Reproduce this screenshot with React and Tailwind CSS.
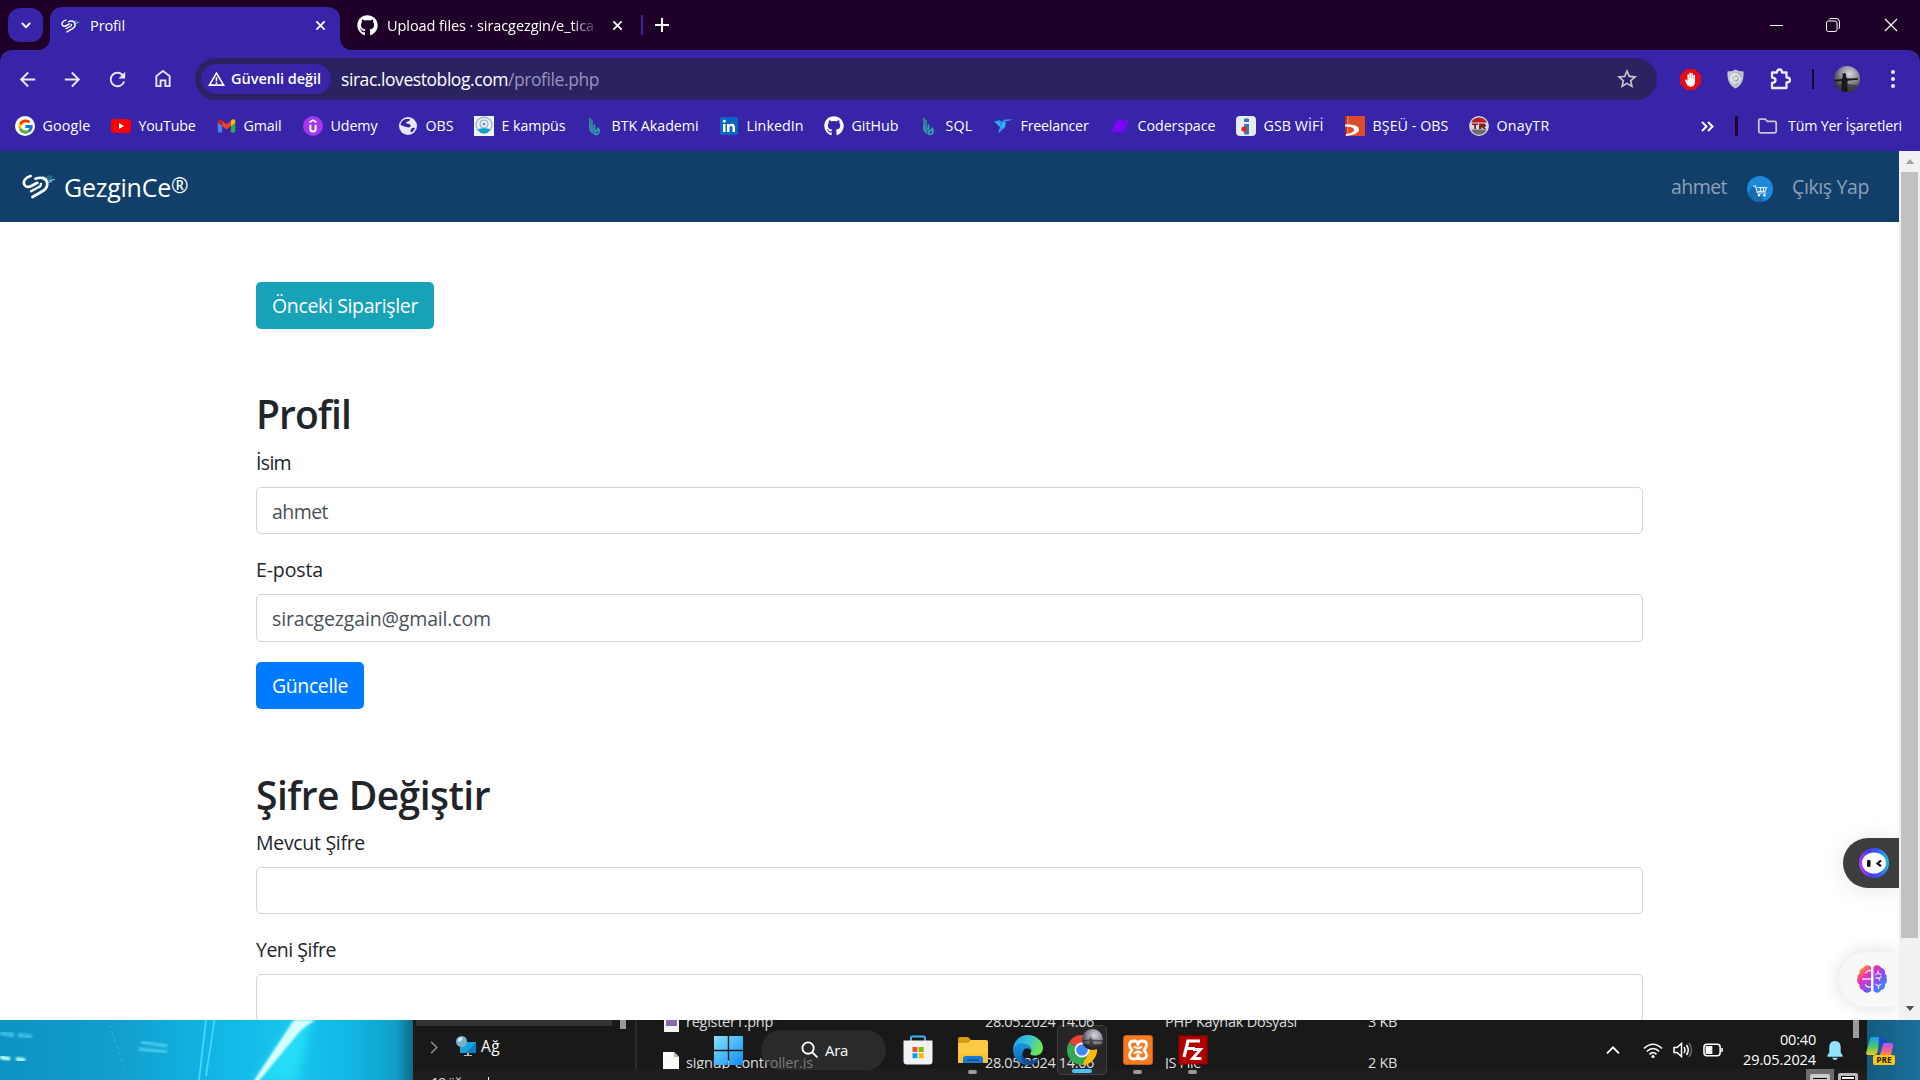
import React, { useLayoutEffect, useRef } from "react";
import { FaGithub } from "react-icons/fa";
import { FcGoogle } from "react-icons/fc";
import { MdArrowBack, MdArrowForward, MdRefresh, MdStarBorder } from "react-icons/md";
import { SiFreelancer } from "react-icons/si";

// Single-line text whose tracking is adjusted so that it fills the given width.
function Fit({ w, className = "", children }) {
  const ref = useRef(null);
  useLayoutEffect(() => {
    const el = ref.current;
    el.style.letterSpacing = "0px";
    const natural = el.getBoundingClientRect().width;
    el.style.letterSpacing = (w - natural) / el.textContent.length + "px";
  }, [w]);
  return (
    <span ref={ref} className={"inline-block shrink-0 whitespace-pre " + className}>
      {children}
    </span>
  );
}

function BrandLogo({ className }) {
  return (
    <svg viewBox="0 0 34 25" className={className} fill="none">
      <path d="M19 3l3-1.500 2 1.500 3-2 4 2-1 2 2 1-4 2.500-3-1-3-2z" fill="#2f83a8" opacity=".6" />
      <path d="M27 6.500l6-1M26 8.500l4-1" stroke="#8fc6de" strokeWidth="1" />
      <path d="M8.500 2C3.500 3.500.8 7 2.300 10.500c1.400 3 4.200 3 7 1.500l6-3.200" stroke="#fff" strokeWidth="2.700" strokeLinecap="round" />
      <path d="M13.500 4.700c5.500-2 10.500-.8 11.500 3.500 1 4-1 7-5 9.300L10.500 23" stroke="#fff" strokeWidth="2.700" strokeLinecap="round" />
      <path d="M9 17.300l7.500-4q2.700-1.500 2.500-3.500" stroke="#fff" strokeWidth="2.300" strokeLinecap="round" />
    </svg>
  );
}

const Cross = ({ className, s = 2 }) => (
  <svg viewBox="0 0 12 12" className={className} stroke="currentColor" strokeWidth={s} fill="none">
    <path d="M1.500 1.500l9 9M10.500 1.500l-9 9" />
  </svg>
);

const GmailIcon = () => (
  <svg viewBox="0 0 20 16" className="h-[14px] w-[19px]">
    <path d="M0 3v11a1.500 1.500 0 0 0 1.500 1.500H5V6z" fill="#4285f4" />
    <path d="M20 3v11a1.500 1.500 0 0 1-1.500 1.500H15V6z" fill="#34a853" />
    <path d="M5 2l5 4 5-4v6l-5 4-5-4z" fill="#ea4335" />
    <path d="M0 2.500C0 .5 2.300-.2 4 1l1 .8V8L0 4.500z" fill="#c5221f" />
    <path d="M20 2.500C20 .5 17.700-.2 16 1l-1 .8V8l5-3.500z" fill="#fbbc04" />
  </svg>
);

const UdemyIcon = () => (
  <svg viewBox="0 0 20 20" className="size-5" fill="none">
    <circle cx="10" cy="10" r="10" fill="#a435f0" />
    <path d="M6.500 6.200L10 4.200l3.500 2" stroke="#fff" strokeWidth="1.600" />
    <path d="M7.400 8.800v4.200a2.600 2.600 0 0 0 5.200 0V8.800" stroke="#fff" strokeWidth="2" />
  </svg>
);

const GlobeIcon = () => (
  <svg viewBox="0 0 20 20" className="size-5">
    <circle cx="10" cy="10" r="9" fill="#e8e8f4" />
    <path d="M11.500 3c1.500 1-.5 2-2 2.500s-2 1.500-1 2 3.500 0 4 1.500-.5 2.500-2 2.500-2.500-1-4-1L2.500 9C3 6 5 3.500 8 3zM13.500 12.500c1-.8 2.500-.8 3.500-.5-.8 2-2 3.500-4 4.500-.8-1-.5-3 .5-4z" fill="#3724a8" />
  </svg>
);

const CampusIcon = () => (
  <svg viewBox="0 0 20 20" className="size-5" fill="none">
    <path d="M0 0h20v20H0z" fill="#eef3f8" />
    <circle cx="10" cy="9" r="7.800" stroke="#7fa3bb" strokeWidth="1.500" strokeDasharray="1.500 .6" />
    <circle cx="10" cy="8" r="4" stroke="#8aa4bd" strokeWidth="1.200" />
    <circle cx="10" cy="8" r="1.500" fill="#6d8fb0" />
    <path d="M4 13c3-1 9-1 12 0-1 3-3 4.500-6 4.500S5 16 4 13z" fill="#0aa3c7" />
  </svg>
);

const LeafIcon = () => (
  <svg viewBox="0 0 20 20" className="size-5" fill="none">
    <path d="M5 1l4 3.500v8.500l-4-3z" fill="#337b9c" />
    <path d="M5 8l4.500 4v6.500c-2.500-1.500-4.500-3-4.500-6z" fill="#318ba4" />
    <path d="M10.500 8.500v6M14.500 13c1.300 2.500 0 5.500-2.500 5.500-2 0-2-2.700 0-3.500s2.500-1.800 2-3.500" stroke="#2f9cb0" strokeWidth="1.900" />
  </svg>
);

const LinkedinIcon = () => (
  <svg viewBox="0 0 18 18" className="size-[18px]">
    <rect width="18" height="18" rx="1.500" fill="#0a66c2" />
    <path d="M3 7h2.500v8H3zM7 7h2.300v1.100C10 7.200 10.800 6.800 12 6.800c2.300 0 3 1.500 3 3.700V15h-2.500v-4.200c0-1.100-.3-1.900-1.300-1.900-1.200 0-1.700.8-1.700 2V15H7z" fill="#fff" />
    <circle cx="4.250" cy="4.300" r="1.450" fill="#fff" />
  </svg>
);

const PlanetIcon = () => (
  <svg viewBox="0 0 20 20" className="size-5" fill="none">
    <circle cx="10" cy="10" r="6.300" fill="#8000ff" />
    <path d="M4 12c-2.500 2-3 3.500-1.500 4C6 16.500 17 8 18.300 5c.5-1.500-1.200-1.300-3-.4" stroke="#7a0af5" strokeWidth="1.600" />
  </svg>
);

const GsbIcon = () => (
  <svg viewBox="0 0 20 20" className="size-5">
    <rect width="20" height="20" rx="4" fill="#e6edf2" />
    <path d="M8 3q3-1.500 5 0v3H8zM8 8h5v10q-2 1-5 0z" fill="#3e79a8" />
    <circle cx="8" cy="13" r="2.600" fill="#ee1c25" />
  </svg>
);

const BseuIcon = () => (
  <svg viewBox="0 0 20 20" className="size-5">
    <path d="M0 0h20v20H0z" fill="#dd4b28" />
    <path d="M0 0h2v20H0z" fill="#b6341c" />
    <path d="M2.500 0h.7v20h-.7z" fill="#f2a58e" />
    <path d="M0 8.500c8-.5 14 1 14 5S8 19 1 20v-2c5-.5 8-2 8-4.300S5 10.500 0 10.500z" fill="#fff" />
  </svg>
);

const TrIcon = () => (
  <svg viewBox="0 0 20 20" className="size-5">
    <circle cx="10" cy="10" r="9.300" fill="#6c6c74" stroke="#ddd" strokeWidth="1.200" />
    <path d="M1.500 9a8.600 8.600 0 0 1 17 0z" fill="#c11c1c" />
    <path d="M1 6.500h18v7H1z" fill="#d9d9de" />
    <path d="M3 7.500h6v1.500H7v4H5.200V9H3zM10 7.500h4.500c3 0 3 3.500.8 3.700l2 1.800h-2.500l-2.300-2v2H10z" fill="#7c2222" />
  </svg>
);

const BOOKMARKS = [
  ["Google", 96, 48, <span className="flex size-5 items-center justify-center rounded-full bg-white"><FcGoogle className="size-[17px]" /></span>],
  ["YouTube", 105, 57, <svg viewBox="0 0 20 14" className="h-[14px] w-5"><rect width="20" height="14" rx="3.500" fill="#f00" /><path d="M8 4l5 3-5 3z" fill="#fff" /></svg>],
  ["Gmail", 87, 38, <GmailIcon />],
  ["Udemy", 95, 47, <UdemyIcon />],
  ["OBS", 76, 28, <GlobeIcon />],
  ["E kampüs", 110, 64, <CampusIcon />],
  ["BTK Akademi", 135, 87, <LeafIcon />],
  ["LinkedIn", 105, 57, <LinkedinIcon />],
  ["GitHub", 94, 47, <FaGithub className="size-5" />],
  ["SQL", 75, 27, <LeafIcon />],
  ["Freelancer", 117, 68, <SiFreelancer className="size-[19px] text-[#29b2fe]" />],
  ["Coderspace", 126, 78, <PlanetIcon />],
  ["GSB WİFİ", 109, 60, <GsbIcon />],
  ["BŞEÜ - OBS", 124, 76, <BseuIcon />],
  ["OnayTR", 100, 53, <TrIcon />],
];

function TabStrip() {
  return (
    <div className="flex h-[50px] bg-[#1f0029] text-[14.500px] leading-[20px]">
      <div className="mt-2 ml-2 flex h-[34px] w-[35px] items-center justify-center rounded-[12px] bg-[#3724a8]">
        <svg viewBox="0 0 12 8" className="h-[7px] w-[10px]" fill="none" stroke="currentColor" strokeWidth="2.200"><path d="M1 1l5 5 5-5" /></svg>
      </div>
      <div className="flex w-[7px] items-end justify-end overflow-visible">
        <svg viewBox="0 0 12 12" className="-ml-[5px] size-3 shrink-0" fill="#3724a8"><path d="M12 0v12H0A12 12 0 0 0 12 0z" /></svg>
      </div>
      <div className="mt-[7px] flex h-[43px] w-[290px] items-center rounded-t-[12px] bg-[#3724a8] pb-[6px] pl-[11px]">
        <BrandLogo className="h-[14px] w-[19px]" />
        <Fit w={35} className="ml-[10px]">Profil</Fit>
        <Cross className="ml-[190px] size-[11px]" />
      </div>
      <div className="flex w-3 items-end"><svg viewBox="0 0 12 12" className="size-3" fill="#3724a8"><path d="M0 0v12h12A12 12 0 0 1 0 0z" /></svg></div>
      <div className="flex items-center pl-[5px]">
        <FaGithub className="size-[21px]" />
        <div className="mt-[2px] ml-[9px] w-[208px] [mask-image:linear-gradient(to_right,black_185px,transparent_212px)]">
          <Fit w={207}>Upload files · siracgezgin/e_tica</Fit>
        </div>
        <Cross className="ml-[17px] size-[11px]" />
        <div className="ml-[18px] h-[20px] w-[2px] bg-[#3724a8]" />
        <svg viewBox="0 0 14 14" className="ml-[12px] size-[14px]" stroke="currentColor" strokeWidth="2"><path d="M7 0v14M0 7h14" /></svg>
      </div>
      <div className="ml-auto flex items-center gap-[43px] pr-[21px]">
        <div className="h-px w-[13px] bg-white" />
        <svg viewBox="0 0 14 14" className="size-[14px]" fill="none" stroke="currentColor"><rect x=".5" y="3" width="10.500" height="10.500" rx="2" /><path d="M3 1.500q.5-1 2-1h5q3.500 0 3.500 3.500v5q0 1.500-1 2" /></svg>
        <Cross className="size-[16px]" s={0.9} />
      </div>
    </div>
  );
}

function Toolbar() {
  return (
    <div className="flex h-[58px] items-center">
      <div className="flex w-[195px] items-center gap-[22px] pl-[16px] text-[#e9e6f8]">
        <MdArrowBack className="size-[23px]" />
        <MdArrowForward className="size-[23px]" />
        <MdRefresh className="size-[23px]" />
        <svg viewBox="0 0 18 20" className="-mt-[2px] ml-[3px] h-[19px] w-[18px]" fill="none" stroke="currentColor" strokeWidth="2"><path d="M2 18V7.500L9 2l7 5.500V18h-4.500v-6h-5v6z" /></svg>
      </div>
      <div className="flex h-[42px] w-[1462px] items-center rounded-full bg-[#2b2262] pl-[6px]">
        <div className="flex h-[30px] w-[130px] items-center rounded-full bg-[#3724a8] pl-[7px]">
          <svg viewBox="0 0 18 16" className="h-[16px] w-[17px]" fill="none" stroke="currentColor" strokeWidth="1.700"><path d="M9 1.700L16.500 14.500h-15zM9 6v4.500M9 11.500v1.800" /></svg>
          <Fit w={90} className="ml-[6px] text-[14.500px] font-semibold leading-[20px]">Güvenli değil</Fit>
        </div>
        <div className="ml-[10px] flex text-[17.500px] leading-[24px]">
          <Fit w={167}>sirac.lovestoblog.com</Fit>
          <Fit w={91} className="text-[#9a93bd]">/profile.php</Fit>
        </div>
        <MdStarBorder className="mr-[18px] ml-auto size-[24px] text-[#c9c6cf]" />
      </div>
      <div className="flex items-center text-[#eeeafb]">
        <svg viewBox="0 0 20 20" className="ml-[23px] size-[21px]"><path d="M6 0h8l6 6v8l-6 6H6l-6-6V6z" fill="#e80d12" /><path d="M4.500 10.300q1-.8 2 .5l.6.7V5.400q.9-1 1.500 0V9h.3V3.800q.9-1 1.600 0V9h.3V4.300q.9-1 1.600 0V9.500h.3V6q.9-1 1.600 0v6c0 3-1.300 4.800-3.700 4.800-2.600 0-3.500-1-4.600-3z" fill="#fff" /></svg>
        <svg viewBox="0 0 18 20" className="ml-[26px] h-[20px] w-[17px]"><path d="M9 0c3 2 6 2 8.500 2 .5 9-2 14.500-8.500 18C2.500 16.500 0 11 .5 2 3 2 6 2 9 0z" fill="#c3c8ce" /><path d="M9 2v16c4-3 6.300-6 6.600-14C13 4 11 3.500 9 2z" fill="#aab0b8" /><circle cx="9" cy="9.500" r="4.600" fill="none" stroke="#f2f2f4" strokeWidth="1.500" /><path d="M7 11l1.500-3 3-.5-1 3z" fill="#e5e5e8" /></svg>
        <svg viewBox="0 0 22 22" className="ml-[25px] size-[22px]" fill="none" stroke="currentColor" strokeWidth="2.300" strokeLinejoin="round"><path d="M3 4.500h5q0-3 2.500-3t2.500 3h4.500V9.500q3.500 0 3.500 2.500t-3.500 2.500v5.500H3v-5q3.500-.5 3.500-2.800T3 9.500z" /></svg>
        <div className="ml-[21px] h-[20px] w-[2px] bg-[#1f0029]" />
        <svg viewBox="0 0 26 26" className="ml-[20px] size-[26px]">
          <defs><radialGradient id="sky" cx=".6" cy=".3" r=".7"><stop stopColor="#d6d6de" /><stop offset=".5" stopColor="#8b8b94" /><stop offset="1" stopColor="#2c2c33" /></radialGradient><clipPath id="round"><circle cx="13" cy="13" r="13" /></clipPath></defs>
          <g clipPath="url(#round)"><path d="M0 0h26v26H0z" fill="url(#sky)" /><path d="M0 20q13-4 26 0v6H0z" fill="#3d3d40" opacity=".8" /><path d="M0 14l8-1 .8-3.200a1.800 1.800 0 1 1 3 0L13 12.500l11-.3v1.500l-10.500 1V26H7.500V15L0 15.500z" fill="#17171c" /></g>
        </svg>
        <div className="ml-[31px] flex flex-col gap-[3px]">
          <i className="size-[4px] rounded-full bg-current" /><i className="size-[4px] rounded-full bg-current" /><i className="size-[4px] rounded-full bg-current" />
        </div>
      </div>
    </div>
  );
}

function Bookmarks() {
  return (
    <div className="flex h-[43px] items-start pt-[8px] pl-[15px] text-[14.250px] leading-[20px]">
      {BOOKMARKS.map(([name, width, textWidth, icon]) => (
        <div key={name} className="flex shrink-0 items-center gap-[7.500px]" style={{ width }}>
          <span className="flex size-5 shrink-0 items-center justify-center">{icon}</span>
          <Fit w={textWidth}>{name}</Fit>
        </div>
      ))}
      <div className="ml-auto flex items-center pr-[18px]">
        <svg viewBox="0 0 13 11" className="h-[11px] w-[13px]" fill="none" stroke="currentColor" strokeWidth="2"><path d="M1 1l4.500 4.500L1 10M7 1l4.500 4.500L7 10" /></svg>
        <div className="ml-[21px] h-5 w-[3px] rounded bg-[#1f0029]" />
        <svg viewBox="0 0 22 18" className="ml-[19px] h-[16px] w-[21px]" fill="none" stroke="#c9c6cf" strokeWidth="2"><path d="M1.200 3q0-1.800 1.800-1.800h5.500l2.300 2.500H19q1.800 0 1.800 1.800V15q0 1.800-1.800 1.800H3q-1.800 0-1.800-1.800z" /></svg>
        <Fit w={114} className="ml-[10px]">Tüm Yer İşaretleri</Fit>
      </div>
    </div>
  );
}

function Field({ label, w, value, vw, tall }) {
  return (
    <div className="mb-[20px]">
      <div className="mb-[10px] h-[30px] pt-px leading-[30px]"><Fit w={w}>{label}</Fit></div>
      <div className={"flex items-center rounded-[5px] border border-[#ced4da] bg-white pt-[2px] pl-[15px] text-[#495057] " + (tall ? "h-[48px]" : "h-[47px]")}>
        {value && <Fit w={vw}>{value}</Fit>}
      </div>
    </div>
  );
}

function Page() {
  return (
    <div className="relative h-[869px] w-[1899px] overflow-hidden bg-white">
      <div className="flex h-[71px] items-center bg-[#123f69] pl-[22px] text-white">
        <BrandLogo className="h-[25px] w-[34px]" />
        <div className="mt-px ml-[8px] flex text-[25px] leading-[36px]">
          <Fit w={107}>GezginCe</Fit>
          <Fit w={20} className="-mt-[2px] text-[21px]">®</Fit>
        </div>
        <div className="ml-auto flex items-center pr-[30px] text-[19.500px] leading-[30px] text-[#8ca1b6]">
          <Fit w={56}>ahmet</Fit>
          <svg viewBox="0 0 26 26" className="mt-[4px] ml-[20px] size-[26px]">
            <circle cx="13" cy="13" r="13" fill="#1e88dc" />
            <path d="M6 10l12 15.500A13 13 0 0 1 1 16.500z" fill="#17629f" opacity=".75" />
            <path d="M6 10h2.500l2 7h8.500M10.500 11.500h9l-1.500 4h-7M13.500 11.500v4M16.500 11.500v4" fill="none" stroke="#dcebf7" strokeWidth="1.200" />
            <circle cx="12" cy="19.300" r="1.200" fill="#fff" /><circle cx="17.500" cy="19.300" r="1.200" fill="#fff" />
          </svg>
          <Fit w={77} className="ml-[19px]">Çıkış Yap</Fit>
        </div>
      </div>
      <div className="mx-[256px] w-[1387px] pt-[60px] text-[19.500px] text-[#212529]">
        <div className="flex h-[47px] w-[178px] items-center rounded-[5px] bg-[#17a2b8] pt-px pl-[16px] text-white"><Fit w={146}>Önceki Siparişler</Fit></div>
        <h2 className="mt-[61px] mb-[9px] h-[48px] text-[39px] leading-[48px] font-semibold"><Fit w={95}>Profil</Fit></h2>
        <Field label="İsim" w={35} value="ahmet" vw={56} />
        <Field label="E-posta" w={67} value="siracgezgain@gmail.com" vw={219} tall />
        <div className="flex h-[47px] w-[108px] items-center rounded-[5px] bg-[#007bff] pt-px pl-[16px] text-white"><Fit w={76}>Güncelle</Fit></div>
        <h2 className="mt-[62px] mb-[8px] h-[48px] text-[39px] leading-[48px] font-semibold"><Fit w={234}>Şifre Değiştir</Fit></h2>
        <Field label="Mevcut Şifre" w={109} />
        <Field label="Yeni Şifre" w={80} tall />
      </div>
      <div className="absolute top-[687px] right-0 flex h-[50px] w-[56px] items-center rounded-l-full bg-[#3c3d3f] pl-[16px] shadow-[0_2px_24px_rgba(0,0,0,0.1)]">
        <svg viewBox="0 0 30 30" className="size-[30px]">
          <defs><linearGradient id="ring" x1="0" y1=".7" x2="1" y2=".6"><stop stopColor="#b63df0" /><stop offset=".4" stopColor="#4339ee" /><stop offset=".7" stopColor="#3d5df5" /><stop offset="1" stopColor="#1cc0d8" /></linearGradient></defs>
          <circle cx="15" cy="15" r="15" fill="url(#ring)" />
          <ellipse cx="15" cy="15" rx="12" ry="10.500" fill="#fff" />
          <rect x="8" y="12" width="3.500" height="7" rx="1.200" fill="#111" />
          <path d="M22 12.500l-3.500 3 3.500 2.700" fill="none" stroke="#111" strokeWidth="2.200" />
        </svg>
      </div>
      <div className="absolute top-[801px] right-0 flex h-[55px] w-[60px] items-center rounded-l-full bg-[#f8f8f9] pb-px pl-[18px] shadow-[0_0_18px_rgba(0,0,0,0.14)]">
        <svg viewBox="0 0 30 28" className="h-[28px] w-[30px]">
          <defs><linearGradient id="brain" x1="0" y1="0" x2="1" y2="1"><stop stopColor="#ff9a1f" /><stop offset=".14" stopColor="#ff8a2f" /><stop offset=".32" stopColor="#f02fb4" /><stop offset=".6" stopColor="#7b52f5" /><stop offset="1" stopColor="#19a8fb" /></linearGradient></defs>
          <path d="M14 2v24c-3 3-7 2-8-1-3-.5-4-3-3.500-5.500C0 18 0 15 .5 14 0 11.500 1 9.500 2.500 8.500 2 5.500 4 3.500 6 3c1.500-3 6-4 8-1zM16.500 2v24c3 3 6.500 1.500 7.500-1 3-.5 4.500-3 4-5.500 2-1.500 2.500-4 1.500-6C30 11.500 29.500 9.500 28 8.500 28.500 5.500 27 3.500 24.500 3c-1.500-3-6-4-8-1z" fill="url(#brain)" />
          <path d="M14 5.500H11.500L8 8.500M5 14h9M14 22h-3.500L8 19.500M21 5.500v2.500l-2.500 2M21 8l3.500 2M18.500 13h4l2-1.500M22.500 13v2.500M18.500 19l3 2v3M21.500 21l2.500-2" fill="none" stroke="#f6d9fb" strokeWidth="1.300" />
        </svg>
      </div>
    </div>
  );
}

function Scrollbar() {
  return (
    <div className="flex h-[869px] w-[21px] flex-col items-center bg-[#f1f1f1]">
      <svg viewBox="0 0 10 6" className="my-[8px] h-[5px] w-[10px]" fill="#a3a3a3"><path d="M0 6l5-6 5 6z" /></svg>
      <div className="h-[766px] w-[17px] bg-[#c1c1c1]" />
      <svg viewBox="0 0 10 6" className="mt-auto mb-[9px] h-[5px] w-[10px]" fill="#505050"><path d="M0 0h10L5 6z" /></svg>
    </div>
  );
}

function FileRow({ icon, name, nw, date, type, tw, size }) {
  return (
    <div className="flex h-[24px] items-center leading-[24px]">
      <span className="flex w-[49px] justify-end pr-[7px]">{icon}</span>
      <span className="w-[299px]"><Fit w={nw}>{name}</Fit></span>
      <span className="w-[180px]"><Fit w={109}>{date}</Fit></span>
      <span className="w-[203px]"><Fit w={tw}>{type}</Fit></span>
      <Fit w={29}>{size}</Fit>
    </div>
  );
}

function Wallpaper() {
  return (
    <svg viewBox="0 0 413 60" className="h-[60px] w-[413px] shrink-0" preserveAspectRatio="none">
      <defs>
        <linearGradient id="sea"><stop stopColor="#0c93c4" /><stop offset=".3" stopColor="#139fcf" /><stop offset=".5" stopColor="#10b4e4" /><stop offset=".7" stopColor="#18c5ee" /><stop offset=".85" stopColor="#10b6e4" /><stop offset=".96" stopColor="#119fc9" /><stop offset="1" stopColor="#0c6a84" /></linearGradient>
        <filter id="soft" x="-50%" width="200%"><feGaussianBlur stdDeviation="5" /></filter>
        <filter id="haze"><feGaussianBlur stdDeviation=".8" /></filter>
      </defs>
      <path d="M0 0h413v60H0z" fill="url(#sea)" />
      <path d="M255 62L294 0h18l-14 62z" fill="#2ff0ff" opacity=".55" filter="url(#soft)" />
      <path d="M253 62L290 6l4-6h22q-12 6-20 16l-38 46z" fill="#d9ffff" filter="url(#haze)" />
      <path d="M206 0l-7 60M214.500 0L206 56" stroke="#45d9fb" strokeWidth="1.700" />
      <path d="M141 22l26 4M139 29l28 3" stroke="#52d6f5" strokeWidth="2.400" filter="url(#haze)" />
      <path d="M0 13l14 2M18 15l14 2" stroke="#3bbde6" strokeWidth="4.500" filter="url(#haze)" />
      <path d="M0 37l10 2M16 39l9 1" stroke="#b9fff2" strokeWidth="4" filter="url(#haze)" />
      <path d="M110 6l16 46" stroke="#4ac9ea" strokeDasharray="2 5" opacity=".7" />
    </svg>
  );
}

function Desktop() {
  return (
    <div className="flex h-[60px] overflow-hidden">
      <Wallpaper />
      <div className="flex h-[60px] w-[1454px] shrink-0 flex-col overflow-hidden bg-[#191919] text-[14.500px] text-[#dedede]">
        <div className="flex h-[49px] overflow-hidden">
          <div className="h-[49px] w-[199px] pl-[3px]">
            <div className="h-[6px] w-[196px] bg-[#333]" />
            <div className="flex h-[42px] items-center pl-[14px]">
              <svg viewBox="0 0 8 14" className="h-[13px] w-[8px]" fill="none" stroke="#8a8a8a" strokeWidth="1.700"><path d="M1 1l6 6-6 6" /></svg>
              <svg viewBox="0 0 20 20" className="-mt-[3px] ml-[18px] size-[20px]"><path d="M4 6h16v11H4z" fill="#16a3dc" /><path d="M20 6v11H10z" fill="#0b7fc0" /><path d="M11 17h2v2h3v1.200H8V19h3z" fill="#bbb" /><circle cx="5.500" cy="5.500" r="5.500" fill="#77b3cf" /><path d="M2 3q3-3 5-1l-2 3-3 1z" fill="#d8ecf5" /></svg>
              <Fit w={19} className="ml-[5px] text-[15.500px] text-white">Ağ</Fit>
            </div>
          </div>
          <div className="w-[23px] pl-[8px]"><div className="h-[9px] w-[6px] bg-[#9a9a9a]" /></div>
          <div className="w-[2px] bg-[#2b2b2b]" />
          <div className="-mt-[10px] flex flex-col gap-[16.500px]">
            <FileRow icon={<span className="flex h-[20px] w-[15px] items-center bg-[#f2f2f2] p-[2px]"><i className="h-[8px] w-full bg-[#8867b4]" /></span>} name="register1.php" nw={87} date="28.05.2024 14:06" type="PHP Kaynak Dosyası" tw={132} size="3 KB" />
            <FileRow icon={<svg viewBox="0 0 16 20" className="-mt-[2px] h-[20px] w-[16px]"><path d="M0 0h11l5 5v15H0z" fill="#fafafa" /><path d="M11 0v5h5z" fill="#bbb" /></svg>} name="signup-controller.js" nw={127} date="28.05.2024 14:06" type="JS File" tw={36} size="2 KB" />
          </div>
          <div className="ml-auto mr-[8px] h-[18px] w-[6px] bg-[#9a9a9a]" />
        </div>
        <div className="flex h-[11px] overflow-hidden bg-[#1e1e1e] pl-[18px] leading-[20px]">
          <div className="mt-[4px] flex"><Fit w={37}>19 öğe</Fit><span className="mt-[4px] ml-[20px] h-[10px] w-px bg-white" /></div>
          <div className="ml-auto flex gap-[4px] pr-[9px]">
            <div className="h-[11px] w-[28px] bg-[#6d6d6d] px-[4px] pt-[5px]"><div className="h-[6px] rounded-t-[2px] bg-[#c9c9c9] px-[3px] pt-[4px]"><div className="h-px bg-black" /></div></div>
            <div className="mt-[4px] h-[7px] w-[20px] rounded-t-[2px] bg-[#b9b9b9] px-[3px] pt-[3px]"><div className="h-[4px] border border-black bg-white" /></div>
          </div>
        </div>
      </div>
      <div className="h-[60px] w-[53px] bg-linear-to-r from-[#145a80] to-[#1c6f9e]" />
    </div>
  );
}

function TaskIcon({ children, dot }) {
  return (
    <div className="flex h-[60px] w-[55px] flex-col items-center pt-[15px]">
      <div className="flex size-[30px] items-center justify-center">{children}</div>
      {dot && <div className="mt-[5px] h-[4px] w-[9px] rounded-full bg-[#9a9a9a]" />}
    </div>
  );
}

function Taskbar() {
  return (
    <div className="absolute bottom-0 left-0 flex h-[60px] w-[1920px] items-start pl-[714px] text-white">
      <svg viewBox="0 0 29 29" className="mt-[16px] size-[29px]">
        <defs><linearGradient id="win" x1="0" y1="0" x2="1" y2="1"><stop stopColor="#8be2ff" /><stop offset="1" stopColor="#0a8df5" /></linearGradient></defs>
        <path d="M0 0h13.800v13.800H0zM15.200 0H29v13.800H15.200zM0 15.200h13.800V29H0zM15.200 15.200H29V29H15.200z" fill="url(#win)" />
      </svg>
      <div className="mt-[10px] ml-[18px] flex h-[40px] w-[125px] items-center rounded-full bg-[#353535]/60 pl-[40px]">
        <svg viewBox="0 0 18 18" className="-mt-[2px] size-[17px]" fill="none" stroke="currentColor" strokeWidth="1.900"><circle cx="7.500" cy="7.500" r="6" /><path d="M12 12l5.500 5.500" /></svg>
        <Fit w={23} className="ml-[7px] text-[15px]">Ara</Fit>
      </div>
      <div className="ml-[4px] flex">
        <TaskIcon>
          <svg viewBox="0 0 30 30" className="size-[30px]"><path d="M8 6V3q0-1.500 1.500-1.500h11Q22 1.500 22 3v3" fill="none" stroke="#3ab7f0" strokeWidth="2" /><path d="M.5 5.500h29V26q0 3.500-3.500 3.500H4Q.5 29.500.5 26z" fill="#f0f1f3" /><path d="M9.500 12h5v5h-5z" fill="#f25022" /><path d="M15.700 12h5v5h-5z" fill="#7fba00" /><path d="M9.500 18.200h5v5h-5z" fill="#00a4ef" /><path d="M15.700 18.200h5v5h-5z" fill="#ffb900" /></svg>
        </TaskIcon>
        <TaskIcon dot>
          <svg viewBox="0 0 30 30" className="size-[30px]"><path d="M0 4q0-2 2-2h8l4 4v4H0z" fill="#d89a12" /><path d="M0 8h10l3-3h15q2 0 2 2v21H0z" fill="#fbcb45" /><path d="M0 18h30v10H0z" fill="#f7bd2f" opacity=".6" /><path d="M5 28v-4q0-3 3-3h14q3 0 3 3v4z" fill="#1779cf" /><path d="M9 25h12" stroke="#0b5394" strokeWidth="1.500" /></svg>
        </TaskIcon>
        <TaskIcon>
          <svg viewBox="0 0 30 30" className="size-[30px]">
            <defs><linearGradient id="edgeA" x1="0" y1="0" x2="1" y2=".4"><stop stopColor="#1e9de0" /><stop offset=".5" stopColor="#35c1df" /><stop offset="1" stopColor="#6be35a" /></linearGradient><linearGradient id="edgeB" x1="0" y1="0" x2="0" y2="1"><stop stopColor="#1b93dd" /><stop offset="1" stopColor="#1263b4" /></linearGradient></defs>
            <path d="M0 15C0 6 7 0 15 0s15 6 15 13c0 5-4 7.500-8 7.500-3 0-5.500-1-4.500-2.500 2-3 .5-8-5-8C6 10 1.500 12 0 15z" fill="url(#edgeA)" />
            <path d="M0 15c1-5 6-7.500 11-6.500 5 .5 7.500 4 7 7-3-4-8-2.500-8.500 3-.4 6 4 10 8.500 11C8 31.500 0 24 0 15z" fill="url(#edgeB)" />
            <path d="M9.500 18c0 5 4 8 9 7.500 3-.2 6-2 8.500-3.500-2 5-6.500 8-11 8-6 0-10-7-6.500-12z" fill="#0f4f95" />
          </svg>
        </TaskIcon>
        <div className="relative mt-[5px] ml-[2px] flex h-[50px] w-[50px] flex-col items-center rounded-[5px] border border-white/10 bg-white/6 pt-[9px]">
          <svg viewBox="0 0 30 30" className="size-[30px]">
            <path d="M15 15L2 7.500A15 15 0 0 1 28 7.500H15z" fill="#ea4335" />
            <path d="M15 15L2 7.500A15 15 0 0 0 15 30l6.500-11.200z" fill="#34a853" />
            <path d="M15 7.500h13A15 15 0 0 1 15 30l6.500-11.200z" fill="#fbbc05" />
            <circle cx="15" cy="15" r="7.500" fill="#fff" /><circle cx="15" cy="15" r="5.800" fill="#4285f4" />
          </svg>
          <svg viewBox="0 0 26 26" className="absolute top-[3px] right-[3px] size-[21px]"><g clipPath="url(#round)"><path d="M0 0h26v26H0z" fill="url(#sky)" /><path d="M0 14l9-1 1.500-4 2 4 13.500 1v1.500H14v11H9V15H0zM0 19h26v7H0z" fill="#17171c" opacity=".6" /></g></svg>
          <div className="mt-[4px] h-[4px] w-[20px] rounded-full bg-[#4cc2ff]" />
        </div>
        <div className="ml-[3px] flex">
          <TaskIcon dot>
            <svg viewBox="0 0 30 30" className="size-[30px]" fill="none"><rect x=".5" y=".5" width="29" height="29" rx="2.500" fill="#f47b20" stroke="#c95d16" /><path d="M15 10c0-2.300-1.500-4-4-4-2.600 0-4.500 1.500-4.500 4 0 2.200 1 3.300 2.500 5-1.500 1.700-2.500 2.800-2.500 5 0 2.500 1.900 4 4.500 4 2.500 0 4-1.700 4-4 0 2.300 1.500 4 4 4 2.600 0 4.500-1.500 4.500-4 0-2.200-1-3.300-2.500-5 1.500-1.700 2.500-2.800 2.500-5 0-2.500-1.900-4-4.500-4-2.500 0-4 1.700-4 4z" stroke="#fff" strokeWidth="2.800" strokeLinejoin="round" /><path d="M11 11.500q4 3.500 8 0M11 18.500q4-3.500 8 0" stroke="#fff" strokeWidth="2.200" /></svg>
          </TaskIcon>
          <TaskIcon dot>
            <svg viewBox="0 0 30 30" className="size-[30px]" fill="none"><rect x="1" y="1" width="28" height="28" fill="#b30000" stroke="#8e0000" strokeWidth="2" strokeDasharray="2 1" /><path d="M6 22l4-16H22M8 13.500h9" stroke="#fff" strokeWidth="3.200" /><path d="M15 14.500h7.500L14.500 23.500h9" stroke="#fff" strokeWidth="2.800" /></svg>
          </TaskIcon>
        </div>
      </div>
      <div className="ml-auto flex h-[60px] items-center pr-[25px]">
        <svg viewBox="0 0 14 8" className="h-[8px] w-[14px]" fill="none" stroke="currentColor" strokeWidth="1.800"><path d="M1 7.300l6-6 6 6" /></svg>
        <svg viewBox="0 0 20 16" className="ml-[23px] h-[17px] w-[20px]" fill="none" stroke="currentColor" strokeWidth="1.600"><path d="M1 6q9-8.500 18 0M3.800 9q6.200-6 12.400 0M6.500 11.800q3.500-3.300 7 0" /><circle cx="10" cy="14" r="1.600" fill="currentColor" stroke="none" /></svg>
        <svg viewBox="0 0 20 16" className="ml-[10px] h-[16px] w-[20px]" fill="none" stroke="currentColor" strokeWidth="1.500"><path d="M1 5.500h3L8.500 1.500v13L4 10.500H1zM11 5q2 3 0 6M13.500 3q3.500 5 0 10" /><path d="M16 1q5 7 0 14" stroke="#666" /></svg>
        <svg viewBox="0 0 21 14" className="ml-[10px] h-[14px] w-[20px]" fill="none" stroke="currentColor" strokeWidth="1.600"><rect x="1" y="1" width="17" height="12" rx="3" /><path d="M3.500 3.500H9v7H3.500zM20 5v4" fill="currentColor" /></svg>
        <div className="ml-[20px] flex w-[73px] flex-col items-end pb-px text-[14.500px] leading-[20px]">
          <Fit w={36}>00:40</Fit>
          <Fit w={73}>29.05.2024</Fit>
        </div>
        <svg viewBox="0 0 16 20" className="ml-[11px] h-[19px] w-[16px]" fill="#8fe3ff"><path d="M8 0c4 0 6 3 6 6.500V12l2 3v1.500H0V15l2-3V6.500C2 3 4 0 8 0zM5 17.500h6q-1 2.500-3 2.500t-3-2.500z" /></svg>
        <svg viewBox="0 0 29 29" className="ml-[23px] size-[29px]">
          <defs><linearGradient id="copA" x1="0" y1="0" x2="0" y2="1"><stop stopColor="#1aa0f0" /><stop offset=".5" stopColor="#43c56e" /><stop offset="1" stopColor="#f6c915" /></linearGradient><linearGradient id="copB" x1="0" y1="0" x2="0" y2="1"><stop stopColor="#a45bf0" /><stop offset=".6" stopColor="#f0609a" /><stop offset="1" stopColor="#fb8a4a" /></linearGradient></defs>
          <path d="M6 1h10L11 17q-.5 2-2.500 2H2Q-.5 19 .3 16L4 3q.5-2 2-2z" fill="url(#copA)" />
          <path d="M13 1h3q2.500 0 3 2l1.500 5H17q-2 0-2.500 2L12 18z" fill="#1c49c8" />
          <path d="M17.500 7H25q2.500 0 2 3l-2 9H14z" fill="url(#copB)" />
          <rect x="7" y="19" width="22" height="10" rx="2" fill="#ffc810" />
          <text x="18" y="27.200" textAnchor="middle" fontSize="8.500" fontWeight="700" fontFamily="Open Sans, sans-serif" fill="#222">PRE</text>
        </svg>
      </div>
    </div>
  );
}

export default function App() {
  return (
    <div className="relative h-[1080px] w-[1920px] overflow-hidden bg-[#1f0029] font-['Open_Sans','Noto_Sans',sans-serif] text-white">
      <TabStrip />
      <div className="h-[101px] rounded-t-[12px] bg-[#3724a8]">
        <Toolbar />
        <Bookmarks />
      </div>
      <div className="flex">
        <Page />
        <Scrollbar />
      </div>
      <Desktop />
      <Taskbar />
    </div>
  );
}
